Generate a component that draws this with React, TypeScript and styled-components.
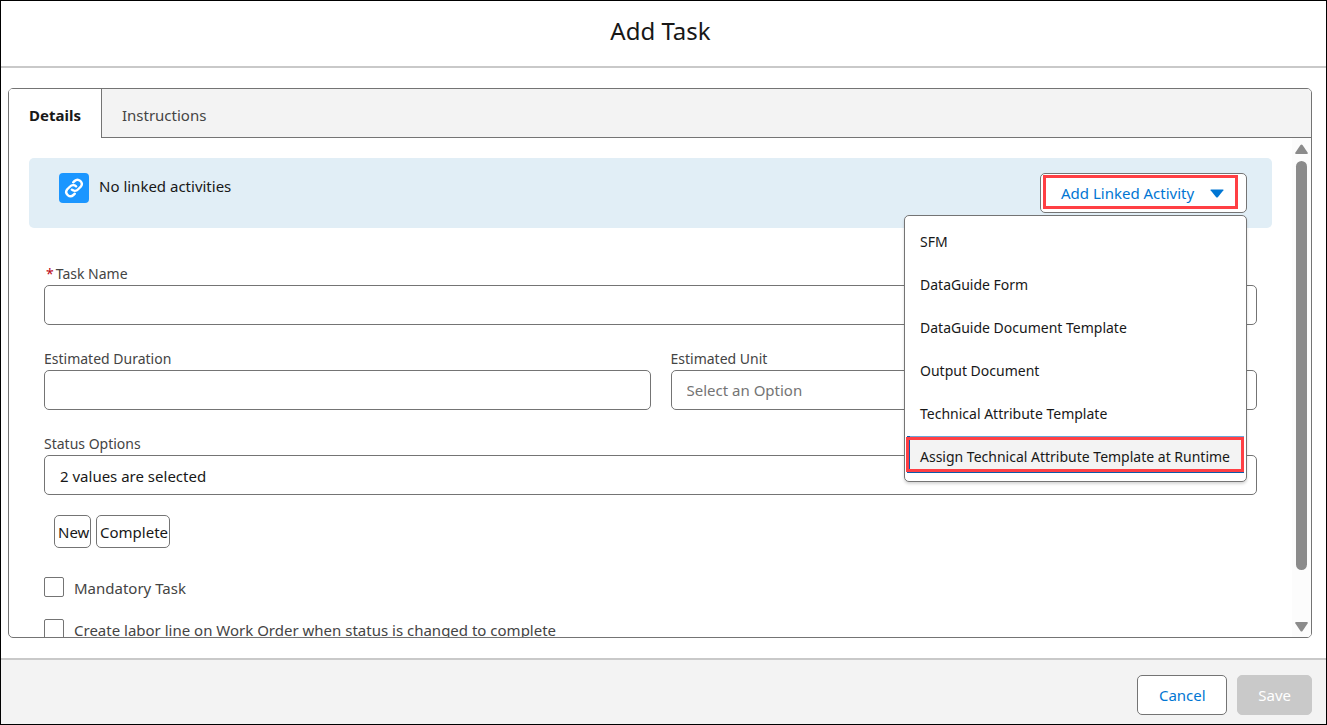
import React from "react";
import styled, { createGlobalStyle, css } from "styled-components";

const color = {
  line: "#747474",
  divider: "#c9c9c9",
  surface: "#f3f3f3",
  text: "#181818",
  label: "#444444",
  link: "#0176d3",
  banner: "#e1eef6",
  callout: "#ff3f44",
  focus: "#0b5cab",
};

const GlobalStyle = createGlobalStyle`
  *, *::before, *::after { box-sizing: border-box; }
  body { margin: 0; background: #fff; }
  body, button, input, select {
    font-family: "Noto Sans", "Open Sans", "Liberation Sans", sans-serif;
    font-size: 15px;
    color: ${color.text};
  }
`;

const Modal = styled.main`
  display: flex;
  flex-direction: column;
  height: 100vh;
  border: 1px solid #000;
`;

const Header = styled.header`
  flex: none;
  padding: 12px 24px 18px 18px;
  border-bottom: 2px solid ${color.divider};
  text-align: center;
`;

const Title = styled.h1`
  margin: 0;
  font-size: 24px;
  font-weight: 400;
  line-height: 35px;
`;

const Content = styled.div`
  flex: 1;
  min-height: 0;
  display: flex;
  padding: 20px 14px 20px 7px;
`;

const TabSet = styled.section`
  flex: 1;
  min-width: 0;
  display: flex;
  flex-direction: column;
  border: 1px solid ${color.line};
  border-radius: 5px;
  overflow: hidden;
`;

const TabBar = styled.div`
  flex: none;
  display: flex;
  height: 49px;
  background: ${color.surface};
  box-shadow: inset 0 -1px ${color.line};
`;

const Tab = styled.button<{ $active?: boolean }>`
  padding: 2px 20px 0;
  border: 0;
  background: transparent;
  color: ${color.label};
  ${(p) =>
    p.$active &&
    css`
      border-right: 1px solid ${color.line};
      background: #fff;
      color: ${color.text};
      font-weight: 700;
    `}
`;

const Panel = styled.div`
  flex: 1;
  min-height: 0;
  display: flex;
`;

const PanelBody = styled.div`
  flex: 1;
  min-width: 0;
  overflow-y: auto;
  scrollbar-width: none;
  padding: 20px 20px 0;
`;

const Scrollbar = styled.div`
  flex: none;
  display: flex;
  flex-direction: column;
  align-items: center;
  gap: 7px;
  width: 19px;
  padding: 6px 0 5px;
  background: #fcfcfc;
`;

const Track = styled.div`
  flex: 1;
`;

const Thumb = styled.div`
  width: 11px;
  height: 90%;
  border-radius: 6px;
  background: #8b8b8b;
`;

const Banner = styled.div`
  display: flex;
  align-items: flex-start;
  height: 70px;
  padding: 15px 25px 0 30px;
  border-radius: 5px;
  background: ${color.banner};
`;

const IconTile = styled.span`
  display: flex;
  align-items: center;
  justify-content: center;
  width: 30px;
  height: 30px;
  border-radius: 4px;
  background: #1b96ff;
`;

const BannerText = styled.p`
  flex: 1;
  margin: 0 10px;
  line-height: 26px;
`;

const MenuAnchor = styled.div`
  position: relative;
`;

const Button = styled.button`
  height: 40px;
  padding: 0 20px;
  border: 1px solid ${color.line};
  border-radius: 5px;
  background: #fff;
  color: ${color.link};
  &:disabled {
    border-color: ${color.divider};
    background: ${color.divider};
    color: #fff;
  }
`;

const CancelButton = styled(Button)`
  min-width: 90px;
`;

const MenuButton = styled(Button)`
  display: flex;
  align-items: center;
  justify-content: space-between;
  width: 207px;
  padding: 0 22px 0 20px;
`;

const Callout = styled.span`
  position: absolute;
  inset: 2px 9px 4px 3px;
  border: 3px solid ${color.callout};
  pointer-events: none;
`;

const Menu = styled.ul`
  position: absolute;
  z-index: 1;
  top: 42px;
  right: 0;
  display: flex;
  flex-direction: column;
  gap: 6px;
  width: 343px;
  margin: 0;
  padding: 5px 2px 8px;
  list-style: none;
  border: 1px solid ${color.line};
  border-radius: 5px;
  background: #fff;
  box-shadow: 0 2px 3px rgba(0, 0, 0, 0.16);
`;

const MenuEntry = styled.li`
  position: relative;
`;

const MenuItem = styled.button<{ $focused?: boolean }>`
  display: block;
  width: 100%;
  height: 37px;
  padding: 3px 12px 0 13px;
  border: 0;
  background: transparent;
  font-size: 14px;
  text-align: left;
  white-space: nowrap;
  ${(p) =>
    p.$focused &&
    css`
      background: ${color.surface};
      box-shadow: inset 3px 0 ${color.focus}, inset 0 -2px ${color.focus}, inset 0 1px #6ba5d8;
    `}
`;

const ItemCallout = styled(Callout)`
  inset: 1px 0 1px -1px;
`;

const Form = styled.form`
  padding: 32px 15px 0;
`;

const Row = styled.div`
  display: grid;
  grid-template-columns: 1fr 1fr;
`;

const Field = styled.div<{ $inset?: boolean }>`
  display: flex;
  flex-direction: column;
  margin-bottom: 20px;
  padding-left: ${(p) => (p.$inset ? "20px" : "0")};
`;

const Label = styled.label`
  height: 25px;
  color: ${color.label};
  font-size: 14px;
  line-height: 28px;
`;

const Required = styled.abbr`
  margin: 0 2px;
  color: #ba0517;
  text-decoration: none;
`;

const control = css`
  width: 100%;
  height: 40px;
  padding: 0 15px;
  border: 1px solid ${color.line};
  border-radius: 5px;
  background: #fff;
`;

const Input = styled.input`
  ${control}
  padding-top: 2px;
`;

const Select = styled.select`
  ${control}
  appearance: none;
  color: ${color.line};
`;

const Chips = styled.div`
  display: flex;
  gap: 5px;
  margin-bottom: 29px;
  padding-left: 10px;
`;

const Chip = styled.span<{ $width: number }>`
  width: ${(p) => p.$width}px;
  height: 33px;
  padding-left: 3px;
  border: 1px solid ${color.line};
  border-radius: 5px;
  line-height: 33px;
  white-space: nowrap;
`;

const CheckRow = styled.label`
  display: flex;
  gap: 10px;
  height: 20px;
  margin-bottom: 22px;
  color: ${color.label};
  line-height: 23px;
`;

const Checkbox = styled.input`
  appearance: none;
  flex: none;
  width: 20px;
  height: 20px;
  margin: 0;
  border: 1px solid ${color.line};
  border-radius: 2px;
  background: #fff;
  &:checked {
    background: ${color.link};
  }
`;

const Footer = styled.footer`
  flex: none;
  display: flex;
  justify-content: flex-end;
  gap: 10px;
  padding: 15px 14px 9px;
  border-top: 2px solid ${color.divider};
  background: ${color.surface};
`;

const LinkIcon = () => (
  <svg width="20" height="20" viewBox="0 0 20 20" fill="none" stroke="#fff" strokeWidth="2.4" strokeLinecap="round">
    <path d="M9.200 4.300 10.600 3a4.200 4.200 0 0 1 6.300 5.500l-3 3a4.200 4.200 0 0 1-6 .2" />
    <path d="M10.800 15.700 9.400 17a4.200 4.200 0 0 1-6.300-5.500l3-3a4.200 4.200 0 0 1 6-.2" />
  </svg>
);

const Caret = () => (
  <svg width="14" height="9" viewBox="0 0 14 9">
    <path d="M1 .5h12q.8 0 .4.7L8 8q-1 1-2 0L.6 1.2Q.2.5 1 .5z" fill={color.link} />
  </svg>
);

const ScrollArrow = ({ down }: { down?: boolean }) => (
  <svg width="13" height="10" viewBox="0 0 13 10">
    <path
      d={
        down
          ? "M1 0h11q1.2.4.6 1.5L7.5 9q-1 1.2-2 0L.4 1.5Q-.2.4 1 0z"
          : "M1 10h11q1.2-.4.6-1.5L7.5 1q-1-1.2-2 0L.4 8.5Q-.2 9.6 1 10z"
      }
      fill="#8b8b8b"
    />
  </svg>
);

const menuItems = [
  "SFM",
  "DataGuide Form",
  "DataGuide Document Template",
  "Output Document",
  "Technical Attribute Template",
  "Assign Technical Attribute Template at Runtime",
];

export default function App() {
  return (
    <>
      <GlobalStyle />
      <Modal>
        <Header>
          <Title>Add Task</Title>
        </Header>
        <Content>
          <TabSet>
            <TabBar role="tablist">
              <Tab role="tab" aria-selected="true" $active>
                Details
              </Tab>
              <Tab role="tab" aria-selected="false">
                Instructions
              </Tab>
            </TabBar>
            <Panel role="tabpanel">
              <PanelBody>
                <Banner>
                  <IconTile>
                    <LinkIcon />
                  </IconTile>
                  <BannerText>No linked activities</BannerText>
                  <MenuAnchor>
                    <MenuButton type="button" aria-haspopup="true" aria-expanded="true">
                      Add Linked Activity
                      <Caret />
                    </MenuButton>
                    <Callout />
                    <Menu>
                      {menuItems.map((item, i) => {
                        const focused = i === menuItems.length - 1;
                        return (
                          <MenuEntry key={item}>
                            <MenuItem type="button" $focused={focused}>
                              {item}
                            </MenuItem>
                            {focused && <ItemCallout />}
                          </MenuEntry>
                        );
                      })}
                    </Menu>
                  </MenuAnchor>
                </Banner>
                <Form>
                  <Field>
                    <Label htmlFor="task-name">
                      <Required title="required">*</Required>Task Name
                    </Label>
                    <Input id="task-name" required />
                  </Field>
                  <Row>
                    <Field>
                      <Label htmlFor="duration">Estimated Duration</Label>
                      <Input id="duration" />
                    </Field>
                    <Field $inset>
                      <Label htmlFor="unit">Estimated Unit</Label>
                      <Select id="unit" defaultValue="">
                        <option value="">Select an Option</option>
                      </Select>
                    </Field>
                  </Row>
                  <Field>
                    <Label htmlFor="status">Status Options</Label>
                    <Input id="status" readOnly value="2 values are selected" />
                  </Field>
                  <Chips>
                    <Chip $width={37}>New</Chip>
                    <Chip $width={74}>Complete</Chip>
                  </Chips>
                  <CheckRow>
                    <Checkbox type="checkbox" />
                    Mandatory Task
                  </CheckRow>
                  <CheckRow>
                    <Checkbox type="checkbox" />
                    Create labor line on Work Order when status is changed to complete
                  </CheckRow>
                </Form>
              </PanelBody>
              <Scrollbar aria-hidden="true">
                <ScrollArrow />
                <Track>
                  <Thumb />
                </Track>
                <ScrollArrow down />
              </Scrollbar>
            </Panel>
          </TabSet>
        </Content>
        <Footer>
          <CancelButton type="button">Cancel</CancelButton>
          <Button type="button" disabled>
            Save
          </Button>
        </Footer>
      </Modal>
    </>
  );
}
